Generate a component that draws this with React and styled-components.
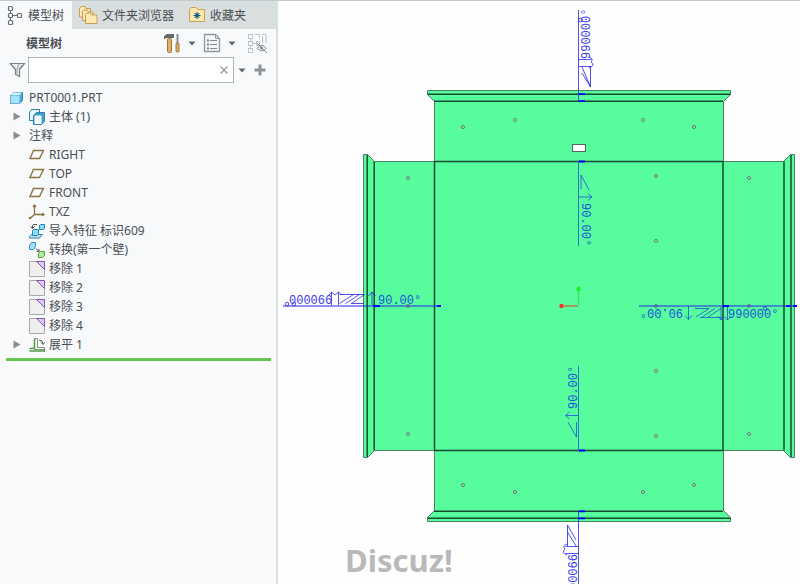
import React, { useState } from "react";
import styled, { createGlobalStyle } from "styled-components";

const GlobalStyle = createGlobalStyle`
  * {
    box-sizing: border-box;
  }

  body {
    margin: 0;
    background: #fefefe;
    color: #4a4e54;
    font-family: "Noto Sans", "Noto Sans CJK SC", sans-serif;
    font-size: 12px;
  }

  button,
  input {
    font: inherit;
    color: inherit;
  }
`;

const Page = styled.div`
  display: grid;
  grid-template-columns: 278px 1fr;
  min-height: 100vh;
  border-top: 1px solid #bfcbcd;
`;

const Sidebar = styled.aside`
  background: #f7f9fb;
  border-right: 2px solid #d9e0e2;
`;

const TabBar = styled.div`
  display: flex;
  height: 28px;
  background: #d8dfde;
`;

const Tab = styled.button`
  display: flex;
  align-items: center;
  gap: 4px;
  padding: 0 8px 0 6px;
  border: 0;
  white-space: nowrap;
  background: ${(props) => (props.$active ? "#f7f9fb" : "transparent")};
`;

const Toolbar = styled.div`
  display: flex;
  align-items: center;
  height: 28px;
  padding: 0 4px 0 26px;
`;

const Title = styled.h1`
  flex: 1;
  margin: 0;
  font-size: 12px;
  font-weight: 700;
`;

const IconButton = styled.button`
  display: flex;
  align-items: center;
  justify-content: center;
  width: ${(props) => props.$width || 20}px;
  height: 24px;
  padding: 0;
  border: 0;
  background: none;
`;

const SearchRow = styled.form`
  display: flex;
  align-items: center;
  padding: 0 6px 0 8px;
`;

const SearchBox = styled.div`
  display: flex;
  flex: 1;
  height: 26px;
  background: #ffffff;
  border: 1px solid #adb6b9;
`;

const SearchInput = styled.input`
  flex: 1;
  min-width: 0;
  padding: 0 6px;
  border: 0;
  outline: none;
  background: none;
`;

const Tree = styled.ul`
  margin: 5px 0 4px;
  padding: 0;
  list-style: none;
`;

const TreeRow = styled.li`
  display: flex;
  align-items: center;
  gap: 4px;
  height: 19px;
  padding-left: 9px;
  line-height: 19px;
  white-space: nowrap;
`;

const Expander = styled.button`
  display: flex;
  align-items: center;
  justify-content: center;
  width: 16px;
  height: 16px;
  padding: 0;
  border: 0;
  background: none;
`;

const Blank = styled.span`
  width: 16px;
`;

const InsertBar = styled.div`
  height: 3px;
  margin: 0 5px 0 6px;
  background: #69c44e;
`;

const Viewport = styled.main`
  position: relative;
  min-width: 0;
`;

const Drawing = styled.svg`
  display: block;
  width: 100%;
  height: auto;
`;

const Watermark = styled.div`
  position: absolute;
  left: 67px;
  bottom: 4px;
  color: #b9b9b9;
  font-family: "Noto Sans", sans-serif;
  font-size: 31px;
  font-weight: 700;
  line-height: 40px;
`;

const Dimension = styled.text`
  fill: ${(props) => (props.$faint ? "#3c3cec" : "#1c50dc")};
  font-family: "Liberation Mono", monospace;
  font-size: 12px;
`;

const TreeTabIcon = () => (
  <svg width="18" height="20" fill="none" stroke="#6a6e73" strokeWidth="1.2">
    <rect x="2.5" y="1.5" width="4" height="4" rx="1" />
    <rect x="2.5" y="8.5" width="4" height="4" rx="1" />
    <rect x="2.5" y="15.5" width="4" height="4" rx="1" />
    <rect x="11.5" y="8.5" width="4" height="4" rx="1" />
    <path d="M4.500 5.500v3M4.500 12.500v3M6.500 10.500h5" />
  </svg>
);

const FoldersIcon = () => (
  <svg width="20" height="20" fill="#ffe9b4" stroke="#c99b57">
    <path d="M1.500 12V3.500L3 1.500h4l1 2h4.500V12z" />
    <path d="M4.500 15.500v-9l1-1.500h4l1 2h4.500v8.500z" />
    <path d="M7.500 18.500v-9l1-1.500h4l1 2h5.500v8.500z" />
  </svg>
);

const FavoritesIcon = () => (
  <svg width="18" height="18">
    <path d="M1.500 15.500v-12L3 1.500h5l1.500 2h7v12z" fill="#ffe7ad" stroke="#cda15c" />
    <path d="M9 6v7M5.500 9.500h7M6.500 7l5 5M11.500 7l-5 5" stroke="#17607f" strokeWidth="1" />
    <circle cx="9" cy="9.500" r="2" fill="#17607f" />
  </svg>
);

const ToolsIcon = () => (
  <svg width="18" height="20">
    <path d="M1 6V3l3-2h7v4H4z" fill="#66696c" />
    <rect x="4.500" y="5.500" width="4" height="14" rx="1" fill="#dfae68" stroke="#a5763a" />
    <path d="M14.500 1v9" stroke="#8b8e91" strokeWidth="2" />
    <rect x="13" y="10" width="3" height="9" rx="1" fill="#dfae68" stroke="#a5763a" />
  </svg>
);

const ListIcon = () => (
  <svg width="18" height="20">
    <path d="M1.500 1.500h11l4 4v13h-15z" fill="#f3f6f8" stroke="#92999d" strokeWidth="1.3" />
    <path d="M12.500 1.500v4h4" fill="none" stroke="#92999d" />
    <path d="M7 7.500h7M7 11.500h7M7 15.500h7" stroke="#7e8890" />
    <path d="M4 7.500h2M4 11.500h2M4 15.500h2" stroke="#7e8890" strokeWidth="2" />
  </svg>
);

const HiddenTreeIcon = () => (
  <svg width="20" height="20" fill="none" stroke="#bfc3c6">
    <rect x="1.500" y="1.500" width="4" height="4" />
    <rect x="1.500" y="8.500" width="4" height="4" />
    <rect x="1.500" y="15.500" width="4" height="4" />
    <rect x="9.500" y="8.500" width="3" height="4" />
    <path d="M3.500 5.500v3M3.500 12.500v3M5.500 10.500h4M8 1.500h4.500v4M15 1.500h4v9M15.500 3v7" />
    <path d="M10 15.500c3-4 7-4 9 0-2 3-6 3-9 0zM10 10l10 10" stroke="#85898c" />
    <circle cx="14.500" cy="15" r="1.500" fill="#85898c" stroke="none" />
  </svg>
);

const FilterIcon = () => (
  <svg width="20" height="18">
    <path d="M2.500 2.500h14l-5 6v7l-4-2v-5z" fill="#eceeef" stroke="#7c8185" strokeWidth="1.2" />
    <path d="M11 3l-2 5v6M14 4l-3 4" fill="none" stroke="#9da2a5" />
  </svg>
);

const CaretIcon = () => (
  <svg width="8" height="5">
    <path d="M0.500 0.500h7L4 4.500z" fill="#63686c" />
  </svg>
);

const ArrowIcon = () => (
  <svg width="8" height="9">
    <path d="M0.500 0.500v8l7-4z" fill="#8b8d8f" />
  </svg>
);

const PartIcon = () => (
  <svg width="16" height="16" stroke="#3285b3">
    <path d="M1.500 5.500l3-3h9v8l-3 3h-9z" fill="#4aacd8" />
    <path d="M1.500 5.500h9v8h-9z" fill="#a4e3fa" stroke="none" />
    <path d="M2 5l2.500-2.500h8.500L10.500 5z" fill="#d9f5ff" stroke="none" />
  </svg>
);

const BodiesIcon = () => (
  <svg width="16" height="16" stroke="#2f81aa">
    <path d="M0.500 3.500l2-3h8v8l-2 3h-8z" fill="#eaf8fd" />
    <path d="M4.500 6.500l3-3h8v9l-3 3h-8z" fill="#3fa0cb" />
    <path d="M5.500 6.500h7v8.500h-7z" fill="#fafdff" stroke="none" />
  </svg>
);

const PlaneIcon = () => (
  <svg width="16" height="16">
    <path d="M4.500 3.500h10l-4 8h-9.500z" fill="none" stroke="#8c7644" strokeWidth="1.4" />
  </svg>
);

const AxesIcon = () => (
  <svg width="16" height="16" fill="none" stroke="#8b7340" strokeWidth="1.3">
    <path d="M5.500 2v8.500H14M5.500 10.500L1.500 14" />
    <path d="M4 3l1.500-2L7 3M13 9l2 1.500L13 12" />
    <rect x="0.500" y="13.500" width="1" height="1" />
  </svg>
);

const ImportIcon = () => (
  <svg width="16" height="16">
    <path d="M8 1.500H4.500Q3 2 3.500 5M1.500 3.500l2 2 2-2" fill="none" stroke="#484c50" />
    <path d="M10.500 2.500l1-1h4v4l-1 1h-4z" fill="#8bdcfa" stroke="#3284b0" />
    <path d="M0.500 13.500l2-2h11l-3 3.500h-10z" fill="#b9e6f6" stroke="#3a84a9" />
    <path d="M3.500 7.500l1-1h5v5l-1 1h-5z" fill="#8bdcfa" stroke="#3284b0" />
  </svg>
);

const ConvertIcon = () => (
  <svg width="16" height="16">
    <path d="M0.500 3.500l2-3h4v4l-2 3h-4z" fill="#a0e0fa" stroke="#3a91bf" />
    <path d="M7 6.500l3 3M10 7v2.500H7.500" fill="none" stroke="#505458" />
    <path d="M9.500 11.500l2-2h4v4l-2 2h-4z" fill="#b3ec9c" stroke="#4f9d3d" />
  </svg>
);

const RemoveIcon = () => (
  <svg width="16" height="16">
    <path d="M0.500 0.500h15v15h-15z" fill="#efefef" stroke="#a9a9ab" />
    <path d="M7.500 0.500h8v8z" fill="#ddc9f5" stroke="#8358a8" />
  </svg>
);

const FlattenIcon = () => (
  <svg width="16" height="16">
    <path d="M5.500 1.500h3v9h7v2h-10z" fill="#f5f8f4" stroke="#849584" />
    <path d="M5.500 2v9.500h-5M0.500 14h15v-2" fill="none" stroke="#559b47" strokeWidth="1.5" />
    <path d="M10 3q4 0 4 4M12 5.500l2 2 1.500-2" fill="none" stroke="#505458" />
  </svg>
);

const TREE = [
  { label: "主体 (1)", icon: BodiesIcon, expandable: true },
  { label: "注释", expandable: true },
  { label: "RIGHT", icon: PlaneIcon },
  { label: "TOP", icon: PlaneIcon },
  { label: "FRONT", icon: PlaneIcon },
  { label: "TXZ", icon: AxesIcon },
  { label: "导入特征 标识609", icon: ImportIcon },
  { label: "转换(第一个壁)", icon: ConvertIcon },
  { label: "移除 1", icon: RemoveIcon },
  { label: "移除 2", icon: RemoveIcon },
  { label: "移除 3", icon: RemoveIcon },
  { label: "移除 4", icon: RemoveIcon },
  { label: "展平 1", icon: FlattenIcon, expandable: true },
];

const HOLES = [
  [463, 127], [515, 120], [643, 120], [694, 127],
  [408, 178], [749, 178], [656, 176], [656, 241],
  [408, 306], [656, 306], [749, 306], [656, 371],
  [656, 436], [408, 434], [749, 434],
  [463, 485], [694, 485], [515, 492], [643, 492],
];

const ModelTree = () => (
  <Tree>
    <TreeRow>
      <PartIcon />
      PRT0001.PRT
    </TreeRow>
    {TREE.map(({ label, icon: Icon, expandable }) => (
      <TreeRow key={label}>
        {expandable ? (
          <Expander aria-label={label}>
            <ArrowIcon />
          </Expander>
        ) : (
          <Blank />
        )}
        {Icon && <Icon />}
        {label}
      </TreeRow>
    ))}
  </Tree>
);

const SheetMetal = () => (
  <g>
    <path
      fill="#57fd9c"
      stroke="#4c7f63"
      d="M427.500 90.500h303v4l-7 7v60h60l7-7h4v303h-4l-7-7h-60v60l7 7v4h-303v-4l7-7v-60h-60l-7 7h-4v-303h4l7 7h60v-60l-7-7z"
    />
    <g fill="none" stroke="#174a31" strokeWidth="1.500">
      <path d="M434.500 161.500h288.500v289h-288.500z" />
      <path d="M427.500 94.200h303M434 101.200h289M434 511.300h289M427.500 518.300h303" />
      <path d="M367.200 155v302M374.200 161.500v289M784 161.500v289M791 155v302" />
    </g>
    <rect x="572.500" y="144.500" width="13" height="7" fill="#ffffff" stroke="#50685b" />
    {HOLES.map(([x, y]) => (
      <circle key={`${x}-${y}`} cx={x} cy={y} r="1.500" fill="#a8f5c8" stroke="#5b7868" />
    ))}
  </g>
);

const Annotations = () => (
  <g fill="none" stroke="#2424ee" strokeWidth="0.800">
    <path strokeWidth="1.200" d="M283 306h157M639 306h157" />
    <path d="M578.500 10v91M578.500 511v73" />
    <path stroke="#1c50dc" d="M578.500 161v85M578.500 366v85" />
    <path
      stroke="#0000ff"
      strokeWidth="1.800"
      d="M579 94.200h6M579 101.200h6M579 161.500h6M579 450.500h6M579 511.300h6M579 518.300h6M373 306h7M437 306h4M723 306h6M786 306h4M793 306h4"
    />

    {/* left bend */}
    <path d="M331.500 305v-13M338.500 305v-13M329 295l2.500-3 3.500 3 3.500-3 3 3M340 294.500h24M339.500 303.500l14-9M345.500 303.500l14-9M351.500 303.500l13-9M351 303.500h13M372 305v-13M368.500 296l3.500-4 3.500 4" />
    <circle cx="287" cy="304" r="1.800" />
    <circle cx="294" cy="304" r="1.800" />

    {/* right bend */}
    <path stroke="#1c50dc" d="M688.500 306v13M685 315.500l3.500 4 3.500-4M695 308.500h14M696 317l13-8.500M702 317l13-8.500M708 317l13-8.500M700 317.500h22M721 307v13M727.500 307v13M718 316l3 4 3.500-3 3 3 3.500-4" />
    <circle cx="765" cy="308.500" r="1.800" />

    {/* top bend */}
    <path d="M578.500 59.500h13M578.500 66.500h13M589 57q5 2 2 5 5 3-2 6M590.500 67v20M582 67l8.500 20M582 73l8.500 14" />
    <circle cx="580.500" cy="20" r="1.800" />

    <path stroke="#1c50dc" d="M581 189v-14l8 15M578.500 197h13M588 193.500l4 3.500-4 3.500" />
    <path stroke="#1c50dc" d="M576.500 422v15l-8.500-15M578.500 415.500H566M569.500 412l-4 3.500 4 3.500" />

    {/* bottom bend */}
    <path d="M578.500 546.500h-13M578.500 553.500h-13M567.500 546v-21l8.500 15M567.500 532l8.500 14M567 544q-5 2-2 5-4 4 2 6" />

    <g stroke="none">
      <Dimension $faint x="289" y="304">000066</Dimension>
      <Dimension x="378" y="304">90.00°</Dimension>
      <Dimension transform="translate(683 309) rotate(180)">90.00°</Dimension>
      <Dimension x="728" y="318">990000°</Dimension>
      <Dimension $faint transform="translate(590 59) rotate(-90)">990000°</Dimension>
      <Dimension transform="translate(582 203) rotate(90)">90.00°</Dimension>
      <Dimension transform="translate(577 409) rotate(-90)">90.00°</Dimension>
      <Dimension $faint transform="translate(568 554) rotate(90)">99000</Dimension>
    </g>
  </g>
);

const Origin = () => (
  <g>
    <path d="M564 306h14" stroke="#c8744c" strokeWidth="1.500" />
    <path d="M578.500 290v15" stroke="#2de85c" strokeWidth="1.500" />
    <circle cx="561.500" cy="306" r="2.200" fill="#fa2a2a" />
    <circle cx="578.500" cy="289" r="2.200" fill="#18ee30" />
    <circle cx="578.500" cy="306" r="1" fill="#3ee8e8" />
  </g>
);

const App = () => {
  const [query, setQuery] = useState("");

  return (
    <>
      <GlobalStyle />
      <Page>
        <Sidebar>
          <TabBar>
            <Tab $active>
              <TreeTabIcon />
              模型树
            </Tab>
            <Tab>
              <FoldersIcon />
              文件夹浏览器
            </Tab>
            <Tab>
              <FavoritesIcon />
              收藏夹
            </Tab>
          </TabBar>
          <Toolbar>
            <Title>模型树</Title>
            <IconButton aria-label="工具">
              <ToolsIcon />
            </IconButton>
            <IconButton aria-label="工具菜单">
              <CaretIcon />
            </IconButton>
            <IconButton aria-label="显示">
              <ListIcon />
            </IconButton>
            <IconButton aria-label="显示菜单">
              <CaretIcon />
            </IconButton>
            <IconButton $width={30} aria-label="隐藏">
              <HiddenTreeIcon />
            </IconButton>
          </Toolbar>
          <SearchRow onSubmit={(e) => e.preventDefault()}>
            <IconButton type="button" aria-label="过滤器">
              <FilterIcon />
            </IconButton>
            <SearchBox>
              <SearchInput
                aria-label="搜索"
                value={query}
                onChange={(e) => setQuery(e.target.value)}
              />
              <IconButton
                type="button"
                $width={18}
                aria-label="清除"
                onClick={() => setQuery("")}
              >
                <svg width="8" height="8" stroke="#95999c" strokeWidth="1.300">
                  <path d="M0.500 0.500l7 7M7.500 0.500l-7 7" />
                </svg>
              </IconButton>
            </SearchBox>
            <IconButton type="button" $width={18} aria-label="搜索选项">
              <CaretIcon />
            </IconButton>
            <IconButton type="button" $width={22} aria-label="添加">
              <svg width="12" height="12" stroke="#8f9396" strokeWidth="3">
                <path d="M6 0.500v11M0.500 6h11" />
              </svg>
            </IconButton>
          </SearchRow>
          <ModelTree />
          <InsertBar />
        </Sidebar>
        <Viewport>
          <Drawing viewBox="278 1 522 583">
            <SheetMetal />
            <Annotations />
            <Origin />
          </Drawing>
          <Watermark>Discuz!</Watermark>
        </Viewport>
      </Page>
    </>
  );
};

export default App;
